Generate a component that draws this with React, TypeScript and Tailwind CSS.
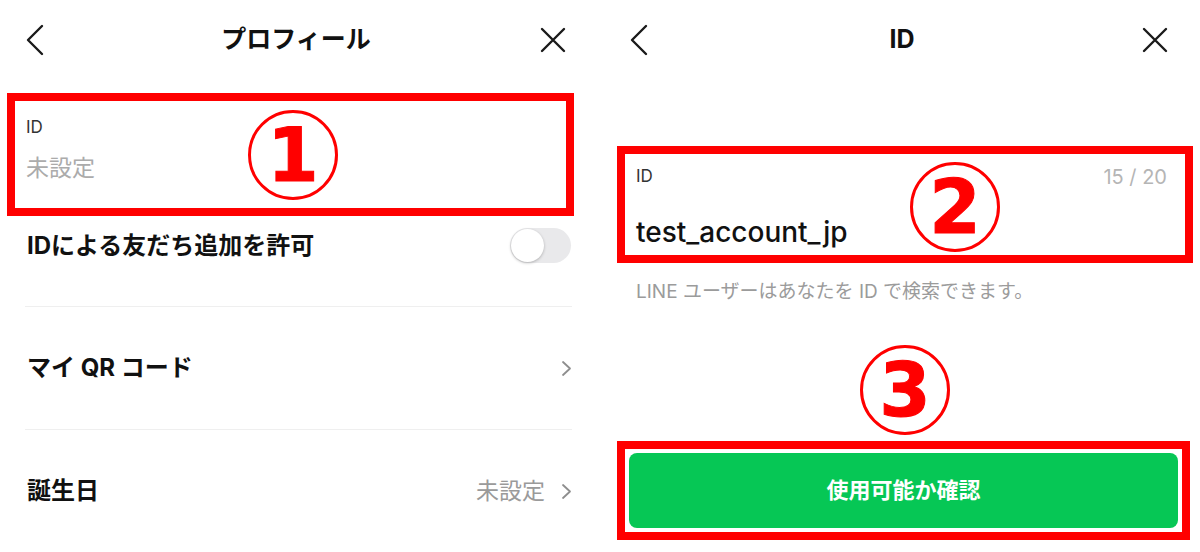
const BackIcon = () => (
  <svg width="20" height="32" viewBox="0 0 20 32" fill="none" stroke="#1a1a1a" strokeWidth="2.4" strokeLinecap="round" strokeLinejoin="round">
    <path d="M17 2 L3 16 L17 30" />
  </svg>
);

const CloseIcon = () => (
  <svg width="26" height="26" viewBox="0 0 26 26" fill="none" stroke="#1a1a1a" strokeWidth="2.4" strokeLinecap="round">
    <path d="M2 2 L24 24 M24 2 L2 24" />
  </svg>
);

const SmallChevron = () => (
  <svg width="11" height="17" viewBox="0 0 11 17" fill="none" stroke="#8e8e8e" strokeWidth="1.8" strokeLinecap="round" strokeLinejoin="round">
    <path d="M2 2 L9 8.5 L2 15" />
  </svg>
);

const Marker = ({ n }: { n: string }) => (
  <div className="w-[90px] h-[90px] rounded-full border-[3px] border-[#ff0000] bg-white flex items-center justify-center">
    <span className="font-['DejaVu_Sans',sans-serif] font-bold text-[74px] leading-none text-[#ff0000] [-webkit-text-stroke:1px_#ff0000]">
      {n}
    </span>
  </div>
);

const Header = ({ title, pl, pr }: { title: string; pl: string; pr: string }) => (
  <div className={`relative h-[80px] flex items-center justify-between ${pl} ${pr}`}>
    <BackIcon />
    <h1 className="absolute inset-x-0 text-center text-[25px] font-bold text-[#111] pointer-events-none">{title}</h1>
    <CloseIcon />
  </div>
);

const Row = ({ label, value }: { label: string; value?: string }) => (
  <div className="h-[122px] flex items-center justify-between pl-[27px] pr-[20px]">
    <span className="text-[24px] font-bold text-[#111]">{label}</span>
    <div className="flex items-center gap-[16px]">
      {value && <span className="text-[23px] text-[#9a9a9a]">{value}</span>}
      <SmallChevron />
    </div>
  </div>
);

const Divider = () => <div className="ml-[25px] mr-[20px] h-px bg-[#efefef]" />;

export default function App() {
  return (
    <div className="w-[1200px] h-[552px] bg-white flex overflow-hidden font-['Inter','Noto_Sans_CJK_JP',sans-serif]">
      {/* profile screen */}
      <div className="w-[592px] shrink-0">
        <Header title="プロフィール" pl="pl-[25px]" pr="pr-[26px]" />

        <div className="relative mt-[13px] ml-[7px] mr-[18px] h-[123px] border-8 border-[#ff0000] pl-[11px] pt-[16px]">
          <div className="text-[17px] leading-[20px] text-[#333]">ID</div>
          <div className="mt-[16px] text-[23px] leading-[30px] text-[#ababab]">未設定</div>
          <div className="absolute left-[233px] top-[9px]">
            <Marker n="1" />
          </div>
        </div>

        <div className="h-[90px] flex items-start justify-between pl-[27px] pr-[21px] pt-[12px]">
          <span className="text-[24px] leading-[35px] font-bold text-[#111]">IDによる友だち追加を許可</span>
          <div className="w-[61px] h-[35px] rounded-full bg-[#e9e9eb] p-[1px] flex items-center">
            <div className="w-[33px] h-[33px] rounded-full bg-white shadow-[0_1px_3px_rgba(0,0,0,0.25)]" />
          </div>
        </div>

        <Divider />
        <Row label="マイ QR コード" />
        <Divider />
        <Row label="誕生日" value="未設定" />
      </div>

      {/* ID screen */}
      <div className="w-[596px] shrink-0 ml-[12px]">
        <Header title="ID" pl="pl-[25px]" pr="pr-[32px]" />

        <div className="relative mt-[66px] ml-[13px] mr-[7px] h-[117px] border-8 border-[#ff0000] pl-[11px] pr-[18px] pt-[13px]">
          <div className="flex items-center justify-between h-[20px]">
            <span className="text-[17px] text-[#333]">ID</span>
            <span className="text-[20px] text-[#b5b5b5]">15 / 20</span>
          </div>
          <div className="mt-[28px] text-[28px] leading-[34px] font-medium text-[#111]">test_account_jp</div>
          <div className="absolute left-[285px] top-[8px]">
            <Marker n="2" />
          </div>
        </div>

        <p className="mt-[17px] pl-[32px] text-[19px] leading-[24px] text-[#9b9b9b]">
          LINE ユーザーはあなたを ID で検索できます。
        </p>

        <div className="mt-[41px] ml-[256px]">
          <Marker n="3" />
        </div>

        <div className="mt-[6px] ml-[13px] mr-[10px] border-8 border-[#ff0000] p-[4px]">
          <button className="w-full h-[75px] rounded-[8px] bg-[#06c755] text-white text-[22px] font-bold">
            使用可能か確認
          </button>
        </div>
      </div>
    </div>
  );
}
